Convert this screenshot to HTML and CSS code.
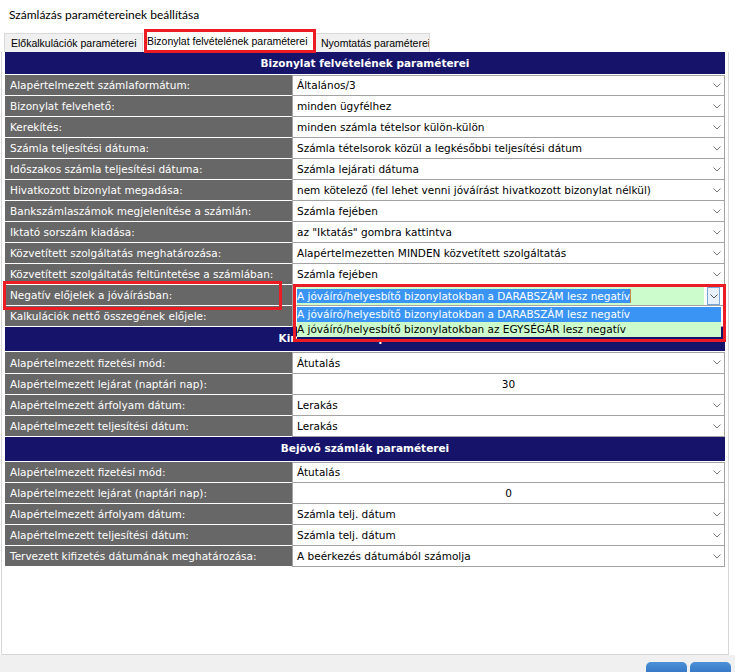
FILE: index.html
```html
<!DOCTYPE html>
<html lang="hu">
<head>
<meta charset="utf-8">
<title>Számlázás paramétereinek beállítása</title>
<link rel="stylesheet" href="styles.css">
</head>
<body>
<div class="window">
  <div class="titlebar">Számlázás paramétereinek beállítása</div>
  <div class="tabs">
    <div class="tab">Előkalkulációk paraméterei</div>
    <div class="tab active">Bizonylat felvételének paraméterei<span class="mark"></span></div>
    <div class="tab">Nyomtatás paraméterei</div>
  </div>
  <div class="panel">
    <table class="params">
      <colgroup><col class="c-label"><col class="c-val"></colgroup>
      <tr class="head h1"><th colspan="2">Bizonylat felvételének paraméterei</th></tr>
      <tr class="first"><td class="label">Alapértelmezett számlaformátum:</td><td class="val"><div class="sel"><span>Általános/3</span><svg class="chev" width="8" height="5" viewBox="0 0 8 5"><polyline points="0.5,0.5 4,4 7.5,0.5"/></svg></div></td></tr>
      <tr><td class="label">Bizonylat felvehető:</td><td class="val"><div class="sel"><span>minden ügyfélhez</span><svg class="chev" width="8" height="5" viewBox="0 0 8 5"><polyline points="0.5,0.5 4,4 7.5,0.5"/></svg></div></td></tr>
      <tr><td class="label">Kerekítés:</td><td class="val"><div class="sel"><span>minden számla tételsor külön-külön</span><svg class="chev" width="8" height="5" viewBox="0 0 8 5"><polyline points="0.5,0.5 4,4 7.5,0.5"/></svg></div></td></tr>
      <tr><td class="label">Számla teljesítési dátuma:</td><td class="val"><div class="sel"><span>Számla tételsorok közül a legkésőbbi teljesítési dátum</span><svg class="chev" width="8" height="5" viewBox="0 0 8 5"><polyline points="0.5,0.5 4,4 7.5,0.5"/></svg></div></td></tr>
      <tr><td class="label">Időszakos számla teljesítési dátuma:</td><td class="val"><div class="sel"><span>Számla lejárati dátuma</span><svg class="chev" width="8" height="5" viewBox="0 0 8 5"><polyline points="0.5,0.5 4,4 7.5,0.5"/></svg></div></td></tr>
      <tr><td class="label">Hivatkozott bizonylat megadása:</td><td class="val"><div class="sel"><span>nem kötelező (fel lehet venni jóváírást hivatkozott bizonylat nélkül)</span><svg class="chev" width="8" height="5" viewBox="0 0 8 5"><polyline points="0.5,0.5 4,4 7.5,0.5"/></svg></div></td></tr>
      <tr><td class="label">Bankszámlaszámok megjelenítése a számlán:</td><td class="val"><div class="sel"><span>Számla fejében</span><svg class="chev" width="8" height="5" viewBox="0 0 8 5"><polyline points="0.5,0.5 4,4 7.5,0.5"/></svg></div></td></tr>
      <tr><td class="label">Iktató sorszám kiadása:</td><td class="val"><div class="sel"><span>az "Iktatás" gombra kattintva</span><svg class="chev" width="8" height="5" viewBox="0 0 8 5"><polyline points="0.5,0.5 4,4 7.5,0.5"/></svg></div></td></tr>
      <tr><td class="label">Közvetített szolgáltatás meghatározása:</td><td class="val"><div class="sel"><span>Alapértelmezetten MINDEN közvetített szolgáltatás</span><svg class="chev" width="8" height="5" viewBox="0 0 8 5"><polyline points="0.5,0.5 4,4 7.5,0.5"/></svg></div></td></tr>
      <tr><td class="label">Közvetített szolgáltatás feltüntetése a számlában:</td><td class="val"><div class="sel"><span>Számla fejében</span><svg class="chev" width="8" height="5" viewBox="0 0 8 5"><polyline points="0.5,0.5 4,4 7.5,0.5"/></svg></div></td></tr>
      <tr><td class="label marked">Negatív előjelek a jóváírásban:</td><td class="val open">
        <div class="combo">
          <div class="field"><span class="seltext">A jóváíró/helyesbítő bizonylatokban a DARABSZÁM lesz negatív</span></div>
          <div class="dbtn"><svg class="chev dark" width="8" height="5" viewBox="0 0 8 5"><polyline points="0.5,0.5 4,4 7.5,0.5"/></svg></div>
        </div>
        <div class="droplist">
          <div class="opt hl">A jóváíró/helyesbítő bizonylatokban a DARABSZÁM lesz negatív</div>
          <div class="opt">A jóváíró/helyesbítő bizonylatokban az EGYSÉGÁR lesz negatív</div>
        </div>
        <span class="vmark"></span>
      </td></tr>
      <tr><td class="label">Kalkulációk nettő összegének előjele:</td><td class="val"><div class="sel"><span></span><svg class="chev" width="8" height="5" viewBox="0 0 8 5"><polyline points="0.5,0.5 4,4 7.5,0.5"/></svg></div></td></tr>
      <tr class="head h2"><th colspan="2">Kimenő számlák paraméterei</th></tr>
      <tr class="first tall"><td class="label">Alapértelmezett fizetési mód:</td><td class="val"><div class="sel"><span>Átutalás</span><svg class="chev" width="8" height="5" viewBox="0 0 8 5"><polyline points="0.5,0.5 4,4 7.5,0.5"/></svg></div></td></tr>
      <tr><td class="label">Alapértelmezett lejárat (naptári nap):</td><td class="val num">30</td></tr>
      <tr><td class="label">Alapértelmezett árfolyam dátum:</td><td class="val"><div class="sel"><span>Lerakás</span><svg class="chev" width="8" height="5" viewBox="0 0 8 5"><polyline points="0.5,0.5 4,4 7.5,0.5"/></svg></div></td></tr>
      <tr><td class="label">Alapértelmezett teljesítési dátum:</td><td class="val"><div class="sel"><span>Lerakás</span><svg class="chev" width="8" height="5" viewBox="0 0 8 5"><polyline points="0.5,0.5 4,4 7.5,0.5"/></svg></div></td></tr>
      <tr class="head h3"><th colspan="2">Bejövő számlák paraméterei</th></tr>
      <tr class="first"><td class="label">Alapértelmezett fizetési mód:</td><td class="val"><div class="sel"><span>Átutalás</span><svg class="chev" width="8" height="5" viewBox="0 0 8 5"><polyline points="0.5,0.5 4,4 7.5,0.5"/></svg></div></td></tr>
      <tr><td class="label">Alapértelmezett lejárat (naptári nap):</td><td class="val num">0</td></tr>
      <tr><td class="label">Alapértelmezett árfolyam dátum:</td><td class="val"><div class="sel"><span>Számla telj. dátum</span><svg class="chev" width="8" height="5" viewBox="0 0 8 5"><polyline points="0.5,0.5 4,4 7.5,0.5"/></svg></div></td></tr>
      <tr><td class="label">Alapértelmezett teljesítési dátum:</td><td class="val"><div class="sel"><span>Számla telj. dátum</span><svg class="chev" width="8" height="5" viewBox="0 0 8 5"><polyline points="0.5,0.5 4,4 7.5,0.5"/></svg></div></td></tr>
      <tr><td class="label">Tervezett kifizetés dátumának meghatározása:</td><td class="val"><div class="sel"><span>A beérkezés dátumából számolja</span><svg class="chev" width="8" height="5" viewBox="0 0 8 5"><polyline points="0.5,0.5 4,4 7.5,0.5"/></svg></div></td></tr>
    </table>
  </div>
  <div class="footer">
    <div class="btn"></div>
    <div class="btn"></div>
  </div>
</div>
</body>
</html>
```
FILE: styles.css
```css
* { box-sizing: border-box; }
html, body { margin: 0; padding: 0; background: #ffffff; }
body { width: 735px; height: 672px; overflow: hidden; }

.window {
  width: 735px;
  height: 672px;
  display: flex;
  flex-direction: column;
  background: #ffffff;
}

.titlebar {
  height: 30px;
  padding: 7px 0 0 9px;
  font-family: Lato, "Noto Sans", sans-serif;
  font-size: 12px;
  color: #000;
  line-height: 16px;
}

.tabs {
  height: 22px;
  display: flex;
  align-items: flex-end;
  padding-left: 4px;
  font-family: "Liberation Sans", Arial, sans-serif;
  font-size: 10.5px;
  color: #000;
}

.tab {
  height: 19px;
  line-height: 18px;
  padding: 0 6px;
  background: #f0f0f0;
  border: 1px solid #d9d9d9;
  border-bottom: none;
  white-space: nowrap;
  overflow: hidden;
}
.tab:first-child { width: 139px; }
.tab.active {
  position: relative;
  overflow: visible;
  height: 22px;
  line-height: 21px;
  background: #ffffff;
  border-color: #ffffff;
  width: 172px;
  padding-left: 3px;
}
.tab:last-child { width: 115px; padding-left: 5px; }

.tab .mark {
  position: absolute;
  left: 0;
  top: -2px;
  width: 172px;
  height: 24px;
  border: 3px solid #ec1c24;
}

.panel {
  flex: 1;
  margin: 0 6px 0 1px;
  border-left: 1px solid #d6d6d6;
  border-right: 1px solid #d6d6d6;
  border-bottom: 1px solid #d6d6d6;
  padding: 0 0 0 3px;
}

.params {
  border-collapse: separate;
  border-spacing: 0;
  table-layout: fixed;
  width: 720px;
  font-family: "DejaVu Sans", sans-serif;
  font-size: 10.5px;
}
.c-label { width: 287px; }
.c-val { width: 433px; }

.params tr { height: 21px; }
.params tr.tall { height: 22px; }
.params tr.head { height: 23px; }
.params tr.h2, .params tr.h3 { height: 25px; }

.params th {
  padding: 0;
  background: #15146a;
  color: #ffffff;
  font-weight: bold;
  text-align: center;
  border-bottom: 1px solid #ffffff;
}
.params tr.h1 th { height: 23px; }
.params tr.h2 th, .params tr.h3 th { height: 25px; padding-bottom: 2px; }

.params td {
  height: 21px;
  padding: 0;
  white-space: nowrap;
  overflow: hidden;
}
.params tr.tall td { height: 22px; }

.params td.label {
  background: #676767;
  color: #ffffff;
  padding-left: 5px;
  border-bottom: 1px solid #ffffff;
}

.params td.val {
  background: #ffffff;
  color: #000000;
  border-left: 1px solid #a3a3a3;
  border-right: 1px solid #a3a3a3;
  border-bottom: 1px solid #a3a3a3;
}
.params tr.first td.val { box-shadow: inset 0 1px 0 #a3a3a3; }

.sel {
  display: flex;
  align-items: center;
  justify-content: space-between;
  height: 20px;
  padding: 0 3px 0 4px;
}

.chev { flex: none; }
.chev polyline { fill: none; stroke: #7a7a7a; stroke-width: 1; }
.chev.dark polyline { stroke: #555555; }

.params td.num { text-align: center; }

.params td.label.marked { position: relative; overflow: visible; }
.params td.label.marked::after {
  content: "";
  position: absolute;
  left: -2px;
  top: -4px;
  width: 273px;
  height: 23px;
  border: 3px solid #ec1c24;
}

.params td.val.open { position: relative; overflow: visible; }

.combo {
  display: flex;
  height: 18px;
  margin: 2px 4px 0 4px;
}
.field {
  flex: 1;
  display: flex;
  align-items: center;
  background: #ccfccc;
  margin-right: 3px;
}
.seltext {
  background: #3a94f4;
  color: #ffffff;
  line-height: 14px;
  border-right: 1px solid #c88a4a;
}
.dbtn {
  width: 13px;
  height: 18px;
  border: 1px solid #7aa6d6;
  background: #e8f1fb;
  display: flex;
  align-items: center;
  justify-content: center;
}

.droplist {
  position: absolute;
  left: 4px;
  top: 22px;
  width: 424px;
  z-index: 2;
  border-bottom: 2px solid #15146a;
}
.opt {
  height: 15px;
  line-height: 15px;
  background: #ccfccc;
  color: #000;
  white-space: nowrap;
}
.opt.hl { background: #3a94f4; color: #ffffff; }

.vmark {
  position: absolute;
  left: 0;
  top: -1px;
  width: 433px;
  height: 58px;
  border: 3px solid #ec1c24;
  z-index: 3;
}

.footer {
  height: 17px;
  background: #f0f0f0;
  display: flex;
  justify-content: flex-end;
  align-items: flex-end;
  gap: 3px;
  padding-right: 4px;
}
.btn {
  width: 41px;
  height: 10px;
  border-radius: 5px 5px 0 0;
  background: linear-gradient(#4b91d9, #3879c6);
}
```
